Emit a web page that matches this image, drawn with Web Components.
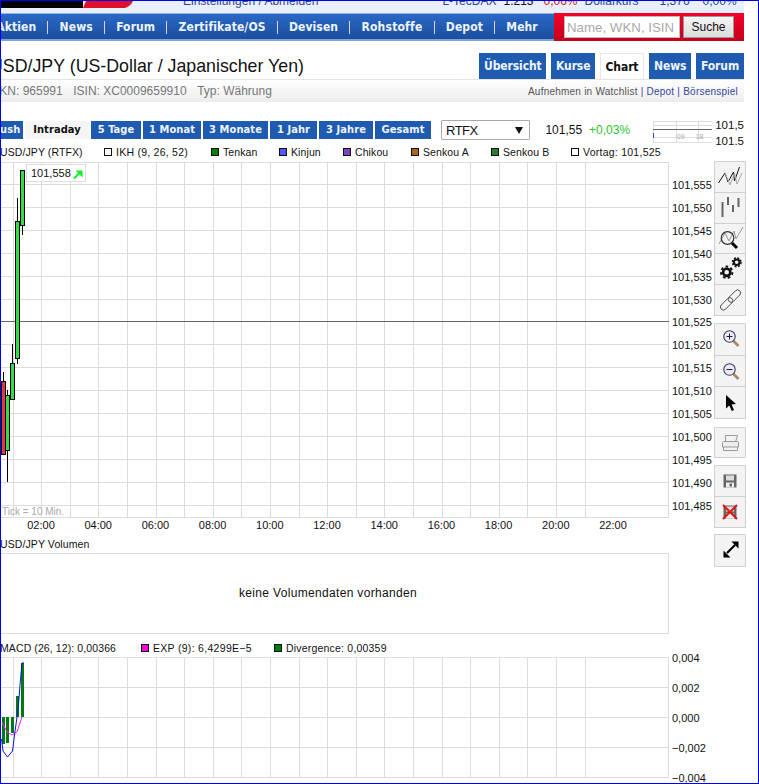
<!DOCTYPE html>
<html lang="de"><head><meta charset="utf-8"><title>USD/JPY Chart</title>
<style>
html,body{margin:0;padding:0;background:#fff}
body{width:759px;height:784px;overflow:hidden;font-family:"Liberation Sans",Arial,sans-serif;color:#111}
</style></head><body>
<quote-page>
  <top-strip></top-strip>
  <main-nav></main-nav>
  <title-bar></title-bar>
  <info-strip></info-strip>
  <range-bar></range-bar>
  <chart-area></chart-area>
</quote-page>
<script>
const BOLD='"DejaVu Sans Condensed","DejaVu Sans",sans-serif';
function def(name,html,init){
  customElements.define(name,class extends HTMLElement{
    constructor(){super();this.attachShadow({mode:'open'}).innerHTML=typeof html==='function'?html():html;}
    connectedCallback(){if(init&&!this._i){this._i=1;init.call(this)}}
  });
}
def('quote-page',`<style>
:host{display:block;box-sizing:border-box;width:759px;height:784px;border:1px solid #0000f0;overflow:hidden;background:#fff;position:relative}
.w{width:743px}
</style><div class="w"><slot></slot></div>`);

def('top-strip',`<style>
:host{display:flex;height:12px;background:#e9effb;overflow:hidden;font-size:12px;color:#2b4a8c;position:relative}
.logo{width:132px;height:7px;flex:none;display:block}
.t{line-height:12px;margin-top:-6px;white-space:nowrap}
.a{margin-left:50px}.b{margin-left:124px}.c{margin-left:7px;color:#111}.r{margin-left:10px;color:#d02020}.d{margin-left:7px}.e{margin-left:21px}.f{margin-left:13px}
</style>
<svg class="logo" viewBox="0 0 132 7"><rect width="82" height="7" fill="#000"/><path d="M82 7 L85 0 H132 Q130 5 124 7Z" fill="#e0102a"/></svg>
<span class="t a">Einstellungen / Abmelden</span><span class="t b">L-TecDAX</span><span class="t c">1.213</span><span class="t r">0,06%</span><span class="t d">Dollarkurs</span><span class="t e">1,376</span><span class="t f">0,00%</span>`);

def('main-nav',`<style>
:host{display:flex;height:28px;box-sizing:border-box;border-top:1px solid #8fb6ec;border-bottom:2px solid #7ea6dc;background:linear-gradient(#2a69c6,#1b4e9e)}
.m{flex:1;display:flex;align-items:center;overflow:hidden;font:bold 12px ${BOLD};color:#eef4ff;white-space:nowrap;letter-spacing:.1px;padding-top:1px}
.m span{padding:0 11.2px;line-height:13px}
.m span+span{border-left:1px solid #dcd0f0}
.m span:first-child{margin-left:-16px}
.s{width:190px;flex:none;margin:-1px 0 -2px;background:linear-gradient(#f5002a,#c4001c);display:flex;align-items:center;gap:3px;padding-left:10px;box-sizing:border-box}
input{width:116px;height:22px;box-sizing:border-box;border:1px solid #bbb;padding:0 2px;font:13.3px "Liberation Sans",sans-serif;margin:0}
input::placeholder{color:#aaa;opacity:1}
button{width:51px;height:22px;box-sizing:border-box;border:1px solid #999;background:linear-gradient(#f6f6f6,#dcdcdc);font:12px "Liberation Sans",sans-serif;color:#111;padding:0}
</style>
<div class="m"><span>Aktien</span><span>News</span><span>Forum</span><span>Zertifikate/OS</span><span>Devisen</span><span style="letter-spacing:.2px">Rohstoffe</span><span>Depot</span><span>Mehr</span></div>
<div class="s"><input placeholder="Name, WKN, ISIN"><button>Suche</button></div>`);

def('title-bar',`<style>
:host{display:flex;height:38px;justify-content:space-between;align-items:flex-end;overflow:hidden}
h1{font:17.8px/21px "Liberation Sans",sans-serif;margin:0 0 2px -11px;color:#111;white-space:nowrap}
.tabs{display:flex;gap:5px}
.tabs b{height:26px;background:#1f5bb1;color:#eef4ff;font:bold 12px/27px ${BOLD};padding:0 5px;text-align:center;box-sizing:border-box;letter-spacing:-.1px}
.tabs b.on{background:#fff;color:#111;border:1px solid #e6e6e6;border-bottom:0;padding:0 4px}
</style><h1>USD/JPY (US-Dollar / Japanischer Yen)</h1>
<div class="tabs"><b style="width:67px">Übersicht</b><b style="width:44px">Kurse</b><b class="on" style="width:44px">Chart</b><b style="width:42px">News</b><b style="width:48px">Forum</b></div>`);

def('info-strip',`<style>
:host{display:flex;height:23px;box-sizing:border-box;border-top:1px solid #e4e4e4;background:linear-gradient(#fff,#ececec);justify-content:space-between;align-items:center;font-size:12px;color:#777;white-space:nowrap}
.l{display:flex;gap:10.5px;margin-left:-13px}
.r{font-size:10px;letter-spacing:.23px;margin-right:6px;color:#36469a}
.r i{font-style:normal;color:#555}
</style><div class="l"><span>WKN: 965991</span><span>ISIN: XC0009659910</span><span>Typ: Währung</span></div>
<div class="r"><i>Aufnehmen in Watchlist</i> | Depot | Börsenspiel</div>`);

def('range-bar',`<style>
:host{display:flex;height:26px;margin-top:18px;align-items:flex-start;white-space:nowrap}
.t{display:flex;gap:2px;margin-left:-11px;margin-top:1px}
.t b{height:18px;font:bold 11px/18px ${BOLD};background:#1f5bb1;color:#eef4ff;text-align:center;display:block;letter-spacing:.1px}
.t b.on{background:#f5f5f5;color:#111}
.sel{width:90px;height:20px;margin:0 0 0 10px;box-sizing:border-box;border:1px solid #aaa;border-radius:1px;font-size:13px;letter-spacing:-.5px;line-height:19px;padding-left:4px;display:flex;justify-content:space-between;align-items:center;color:#111}
.sel svg{margin-right:5px}
.p{font-size:12px;margin:3px 0 0 15px;width:44px}
.g{font-size:12px;margin-top:3px;color:#2fc12f;width:64px}
.m{display:block;width:60px;height:23px;margin-top:1px}
.v{font-size:11.5px;line-height:16px;margin:-3px 0 0 3px}
</style>
<div class="t"><b style="width:33px">Push</b><b class="on" style="width:64px">Intraday</b><b style="width:50px">5 Tage</b><b style="width:58px">1 Monat</b><b style="width:65px">3 Monate</b><b style="width:47px">1 Jahr</b><b style="width:54px">3 Jahre</b><b style="width:56px">Gesamt</b></div>
<div class="sel">RTFX<svg width="9" height="8"><path d="M0 1H8L4 8Z" fill="#111"/></svg></div>
<span class="p">101,55</span><span class="g">+0,03%</span>
<svg class="m" viewBox="0 0 60 23" shape-rendering="crispEdges"><g stroke="#ddd" fill="none"><rect x=".5" y=".5" width="59" height="21"/><path d="M0 4.5H60M23.5 0V22M45.5 0V22M0 16.5H60"/></g><path d="M0 8.5H60" stroke="#666"/><path d="M.5 12V17" stroke="#2255bb"/><g font-family="Liberation Sans,sans-serif" font-size="7" fill="#aaa"><text x="24" y="18.5">09</text><text x="43" y="18.5">18</text></g></svg>
<div class="v">101,5<br>101.5</div>`);

def('chart-legend',`<style>
:host{display:flex;height:12px;align-items:center;font-size:10.5px;line-height:12px;color:#111;white-space:nowrap;letter-spacing:.1px}
::slotted(*){flex:none}
</style><slot></slot>`);
def('leg-item',`<style>
:host{display:inline-flex;align-items:center;gap:4px}
i{width:6px;height:6px;border:1px solid #111;display:block;background:var(--c,#fff)}
</style><i></i><slot></slot>`);
def('tool-btn',`<style>
:host{display:block;width:32px;box-sizing:border-box;height:var(--h,31px);background:#f3f3f3;border:1px solid #d0d0d0;margin-top:-1px;flex:none}
::slotted(svg){display:block;width:32px;height:31px;margin:-1px}
</style><slot></slot>`);

const ZIG=`<path d="M4.5 22L11 12L14 21L19.5 11L20.5 20L25.5 6" fill="none" stroke="#111" stroke-width="1"/><path d="M11 12L16 24L20.5 12L23 23L28 12" fill="none" stroke="#aaa"/>`;
const ICONS={
 line:ZIG,
 bars:`<g fill="#666"><rect x="7.5" y="10" width="2" height="15"/><rect x="13" y="5" width="2" height="8"/><rect x="18" y="13" width="2" height="7"/><rect x="23.5" y="6" width="2" height="9"/></g>`,
 find:`<path d="M5 21L11 10L15 18L20 8L22 16L29 4" fill="none" stroke="#999"/><circle cx="13.5" cy="15" r="6.3" fill="none" stroke="#333" stroke-width="1.2"/><path d="M18 20L23 25" stroke="#000" stroke-width="3"/>`,
 gears:`<g fill="none" stroke="#111"><circle cx="12.7" cy="19.3" r="3.6" stroke-width="2.6"/><circle cx="12.7" cy="19.3" r="5.7" stroke-width="2" stroke-dasharray="2.6 2.4"/><circle cx="22.7" cy="9.3" r="2.8" stroke-width="2"/><circle cx="22.7" cy="9.3" r="4.3" stroke-width="1.6" stroke-dasharray="1.9 1.5"/></g>`,
 link:`<g transform="rotate(-45 16.5 16)" fill="none" stroke="#444" stroke-width=".9"><rect x="3.5" y="13" width="15" height="6" rx="3"/><rect x="14.5" y="13" width="15" height="6" rx="3"/></g>`,
 zin:`<path d="M19.5 18L24.5 23" stroke="#a58a68" stroke-width="2.6"/><circle cx="15.5" cy="13.5" r="5.7" fill="#eaeaf8" stroke="#3c3c66" stroke-width="1.1"/><path d="M12.5 13.5H18.5M15.5 10.5V16.5" stroke="#222"/>`,
 zout:`<path d="M19.5 19L24.5 24" stroke="#a58a68" stroke-width="2.6"/><circle cx="15.5" cy="14.5" r="5.7" fill="#eaeaf8" stroke="#3c3c66" stroke-width="1.1"/><path d="M12.5 14.5H18.5" stroke="#222"/>`,
 arrow:`<path d="M12 9V22.5L15.3 19.6L17.8 25L20 24L17.6 18.6L22 18Z" fill="#000"/>`,
 print:`<g fill="none" stroke="#999"><path d="M11.5 15V8.5H23.5L21.5 15"/><path d="M8.5 20V15.5Q8.5 14.5 9.5 14.5H23.5Q24.5 14.5 24.5 15.5V20Z" fill="#eee"/><path d="M9.5 20V23.5H23.5V20"/></g>`,
 save:`<path d="M9.5 9.5H22.5V22.5H9.5Z" fill="#666"/><rect x="12" y="10.5" width="8" height="5" fill="#ddd"/><rect x="12" y="17.5" width="8" height="5" fill="#eee"/><rect x="15.5" y="18.5" width="2.5" height="3" fill="#666"/>`,
 del:`<path d="M9.5 9.5H22.5V22.5H9.5Z" fill="#666"/><rect x="12" y="10.5" width="8" height="5" fill="#ddd"/><rect x="12" y="17.5" width="8" height="5" fill="#eee"/><path d="M9 9L23 23M23 9L9 23" stroke="#ee1111" stroke-width="2"/>`,
 expand:`<path d="M13 19L21 11" stroke="#000" stroke-width="2.2"/><path d="M24.5 7.5V14.5L17.5 7.5ZM9.5 23.5V16.5L16.5 23.5Z" fill="#000"/>`
};
function ico(n){return `<tool-btn><svg viewBox="0 0 32 31">${ICONS[n]}</svg></tool-btn>`;}

const VX=[];for(let i=0;i<=20;i++){VX.push(Math.round(12.6+28.6*i));}
const vgrid=(y1,y2)=>VX.filter(x=>x<668).map(x=>`M${x+.5} ${y1}V${y2}`).join('')+`M668.5 ${y1}V${y2}`;
const HY=[162,184,207,230,253,276,299,344,367,390,413,436,459,482,505,517];
const PRICES=['101,555','101,550','101,545','101,540','101,535','101,530','101,525','101,520','101,515','101,510','101,505','101,500','101,495','101,490','101,485'];
const candle=(x,t,b,wt,wb,f)=>`<path d="M${x+2.5} ${wt}V${wb}" stroke="#000" shape-rendering="crispEdges"/><rect x="${x+.5}" y="${t+.5}" width="4" height="${b-t}" fill="${f}" stroke="#000" shape-rendering="crispEdges"/>`;

function priceSvg(){
 const h=HY.map(y=>`M1 ${y+.5}H669`).join('');
 let labels='';
 PRICES.forEach((p,i)=>{const y=[185,208,231,254,277,300,322,345,368,391,414,437,460,483,506][i];labels+=`<text x="672" y="${y+3.5}">${p}</text>`;});
 let xl='';for(let i=0;i<11;i++){const hh=String(2+2*i).padStart(2,'0');xl+=`<text x="${41+57.2*i}" y="529" text-anchor="middle">${hh}:00</text>`;}
 return `<svg viewBox="1 158 713 380" width="713" height="380" style="display:block" font-family="Liberation Sans,sans-serif" font-size="11" fill="#111">
 <path d="${vgrid(162,518)}${h}" stroke="#dcdcdc" fill="none" shape-rendering="crispEdges"/>
 <path d="M1 321.5H669" stroke="#666" shape-rendering="crispEdges"/>
 <text x="2" y="515" fill="#aaa" font-size="10">Tick = 10 Min.</text>
 ${candle(1,381,454,372,381,'#e23a3a')}
 ${candle(5,395,450,390,482,'#33dd44')}
 ${candle(10,363,399,344,363,'#33dd44')}
 ${candle(15,221,358,198,364,'#33dd44')}
 ${candle(20,170,225,170,235,'#33dd44')}
 <rect x="26.5" y="164.5" width="59" height="17" fill="#fff" stroke="#ddd" shape-rendering="crispEdges"/>
 <text x="31" y="177">101,558</text>
 <path d="M74 178.5L80 172.5" stroke="#11ee22" stroke-width="2"/><path d="M75.5 170.5H82.5V177.5Z" fill="#11ee22"/>
 ${labels}${xl}</svg>`;
}
function volSvg(){
 return `<svg viewBox="1 550 713 92" width="713" height="92" style="display:block" font-family="Liberation Sans,sans-serif" font-size="12" fill="#111">
 <path d="M1 553.5H668.5V633.5H1" stroke="#dcdcdc" fill="none" shape-rendering="crispEdges"/>
 <text x="328" y="597" text-anchor="middle" letter-spacing=".33">keine Volumendaten vorhanden</text></svg>`;
}
function macdSvg(){
 const h=[657,687,717,747,777].map(y=>`M1 ${y+.5}H669`).join('');
 const vals=['0,004','0,002','0,000','−0,002','−0,004'];
 return `<svg viewBox="1 654 713 129" width="713" height="129" style="display:block" font-family="Liberation Sans,sans-serif" font-size="11" fill="#111">
 <path d="${vgrid(657,778)}${h}" stroke="#dcdcdc" fill="none" shape-rendering="crispEdges"/>
 <g fill="#007a10" shape-rendering="crispEdges"><rect x="2" y="717" width="3" height="27"/><rect x="6" y="717" width="3" height="26"/><rect x="11" y="717" width="3" height="16"/><rect x="16" y="696" width="3" height="21"/><rect x="21" y="663" width="3" height="54"/></g>
 <path d="M2 722L7 732L12 735L17 732L22 717" fill="none" stroke="#ff22ff"/>
 <path d="M1.5 739L3 751L7.5 757L12.5 751L14.5 735L17 717L18.5 705L20 685L22 663H24" fill="none" stroke="#1010e0"/>
 ${vals.map((v,i)=>`<text x="672" y="${662+30*i}">${v}</text>`).join('')}</svg>`;
}
const W=n=>`style="width:${n}px"`;
def('chart-area',()=>`<style>
:host{display:flex;height:637px}
.c{width:713px;flex:none;overflow:hidden}
chart-legend{margin-left:-1px}
.t{width:32px;flex:none;display:flex;flex-direction:column;padding-top:15px}
.g{display:flex;flex-direction:column}
.g tool-btn:first-child{margin-top:0}
</style>
<div class="c">
<chart-legend><span ${W(104)}>USD/JPY (RTFX)</span><leg-item style="width:107px;letter-spacing:.25px">IKH (9, 26, 52)</leg-item><leg-item style="--c:#008000;width:68px">Tenkan</leg-item><leg-item style="--c:#5555ff;width:64px">Kinjun</leg-item><leg-item style="--c:#7a44c0;width:68px">Chikou</leg-item><leg-item style="--c:#a86420;width:80px">Senkou A</leg-item><leg-item style="--c:#2e7a34;width:80px">Senkou B</leg-item><leg-item style="letter-spacing:.25px">Vortag: 101,525</leg-item></chart-legend>
${priceSvg()}
<chart-legend><span>USD/JPY Volumen</span></chart-legend>
${volSvg()}
<chart-legend><span ${W(141)}>MACD (26, 12): 0,00366</span><leg-item style="--c:#ff00e0;width:133px;letter-spacing:.3px">EXP (9): 6,4299E−5</leg-item><leg-item style="--c:#007a10;letter-spacing:.2px">Divergence: 0,00359</leg-item></chart-legend>
${macdSvg()}
</div>
<div class="t">
<div class="g" style="--h:31.8px">${ico('line')}${ico('bars')}${ico('find')}${ico('gears')}${ico('link')}</div>
<div class="g" style="--h:32.7px;margin-top:7px">${ico('zin')}${ico('zout')}${ico('arrow')}</div>
<div class="g" style="--h:31px;margin-top:8px">${ico('print')}</div>
<div class="g" style="--h:32px;margin-top:7px">${ico('save')}${ico('del')}</div>
<div class="g" style="--h:33px;margin-top:6px">${ico('expand')}</div>
</div>`);
</script>
</body></html>
